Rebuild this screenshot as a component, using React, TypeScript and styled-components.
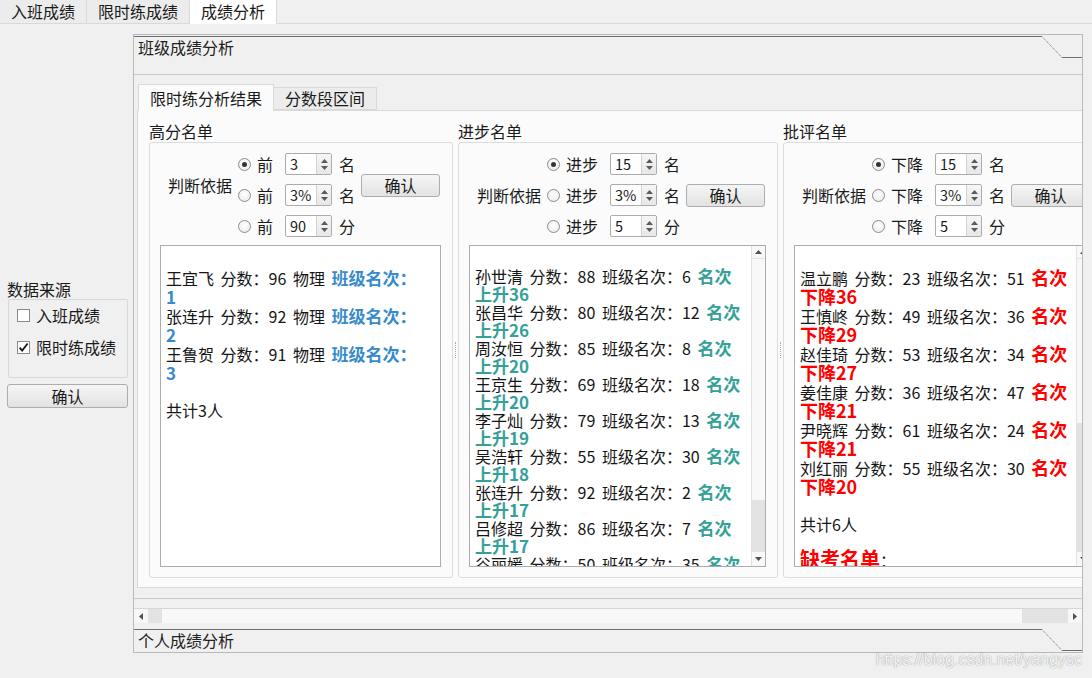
import React from 'react';
import styled, { createGlobalStyle } from 'styled-components';

const UI_FONT = '"Noto Sans CJK SC", "Noto Sans", sans-serif';

const GlobalStyle = createGlobalStyle`
  * { box-sizing: border-box; }
  html, body { margin: 0; padding: 0; }
  body {
    background: #f0f0f0;
    font-family: ${UI_FONT};
    font-size: 16px;
    color: #1a1a1a;
    overflow: hidden;
  }
`;

const Page = styled.div`
  position: relative;
  width: 1092px;
  height: 678px;
  overflow: hidden;
`;

/* ---- top tab bar ---- */
const TopTabBar = styled.div`
  display: flex;
  align-items: flex-start;
  height: 24px;
  border-bottom: 1px solid #d9d9d9;
`;

const TopTab = styled.div<{ $active?: boolean }>`
  height: ${(p) => (p.$active ? 24 : 23)}px;
  padding: 0 11px;
  line-height: 23px;
  border-right: 1px solid #d9d9d9;
  background: ${(p) => (p.$active ? '#ffffff' : '#ececec')};
`;

const Body = styled.div`
  display: flex;
  height: 619px;
  margin-top: 10px;
`;

/* ---- left side panel ---- */
const SidePanel = styled.div`
  width: 133px;
  flex-shrink: 0;
  display: flex;
  flex-direction: column;
  justify-content: center;
  padding-left: 8px;
`;

const SideTitle = styled.div`
  line-height: 20px;
  margin-left: -1px;
`;

const SideGroup = styled.div`
  width: 120px;
  border: 1px solid #d8d8d8;
  border-radius: 2px;
  padding: 4px 0 19px 8px;
  display: flex;
  flex-direction: column;
  gap: 10px;
`;

const CheckRow = styled.div`
  display: flex;
  align-items: center;
  gap: 6px;
  height: 22px;
`;

const CheckBox = styled.span`
  width: 13px;
  height: 13px;
  border: 1px solid #8a8a8a;
  background: #ffffff;
  display: flex;
  align-items: center;
  justify-content: center;
`;

const PushButton = styled.div<{ $w: number; $lift?: number }>`
  width: ${(p) => p.$w}px;
  height: 23px;
  flex-shrink: 0;
  border: 1px solid #adadad;
  border-radius: 3px;
  background: linear-gradient(#f5f5f5, #e3e3e3);
  display: flex;
  align-items: center;
  justify-content: center;
  line-height: 20px;
  margin-bottom: ${(p) => p.$lift ?? 0}px;
`;

const SideButton = styled(PushButton)`
  height: 24px;
  margin-top: 6px;
  margin-left: -1px;
`;

const CritButton = styled(PushButton)`
  margin-left: 6px;
`;

/* ---- main frame ---- */
const MainFrame = styled.div`
  width: 950px;
  height: 619px;
  flex-shrink: 0;
  border: 1px solid #b9b9b9;
  display: flex;
  flex-direction: column;
`;

const HeaderWrap = styled.div<{ $first?: boolean }>`
  display: flex;
  align-items: flex-start;
  height: ${(p) => (p.$first ? 40 : 23)}px;
  padding-top: ${(p) => (p.$first ? 1 : 0)}px;
  border-bottom: ${(p) => (p.$first ? '1px solid #c8c8c8' : 'none')};
  flex-shrink: 0;
`;

const HeaderMain = styled.div`
  flex: 1;
  align-self: stretch;
  border-top: 1px solid #6e6e6e;
  padding: 0 0 0 4px;
  line-height: 21px;
  color: #222;
`;

const HeaderTail = styled.div`
  width: 20px;
  height: 22px;
  border-bottom: 1px solid #6e6e6e;
`;

const SectionHeader = ({ title, first }: { title: string; first?: boolean }) => (
  <HeaderWrap $first={first}>
    <HeaderMain>{title}</HeaderMain>
    <svg width="20" height="22" viewBox="0 0 20 22">
      <line x1="0" y1="0.5" x2="20" y2="21.5" stroke="#6e6e6e" strokeWidth="1" strokeDasharray="1 1" />
    </svg>
    <HeaderTail />
  </HeaderWrap>
);

const SectionBody = styled.div`
  display: flex;
  flex-direction: column;
  height: 554px;
  flex-shrink: 0;
`;

const Viewport = styled.div`
  height: 524px;
  overflow: hidden;
  padding: 9px 0 0 3px;
  border-bottom: 1px solid #cacaca;
`;

/* ---- scrollbars ---- */
const HScroll = styled.div`
  display: flex;
  height: 15px;
  margin: 9px 0 6px;
  border-top: 1px solid #d6d6d6;
  background: #f7f7f7;
`;

const ArrowCell = styled.div<{ $w: number; $h: number }>`
  width: ${(p) => p.$w}px;
  height: ${(p) => p.$h}px;
  flex-shrink: 0;
  display: flex;
  align-items: center;
  justify-content: center;
`;

const TrackPiece = styled.div<{ $w?: number }>`
  background: #e3e3e3;
  width: ${(p) => p.$w ?? 14}px;
  flex-shrink: 0;
`;

const Thumb = styled.div<{ $h?: number }>`
  background: #f8f8f8;
  ${(p) => (p.$h ? `height: ${p.$h}px; flex-shrink: 0;` : 'flex: 1;')}
`;

const VScroll = styled.div`
  width: 14px;
  flex-shrink: 0;
  display: flex;
  flex-direction: column;
  border-left: 1px solid #e2e2e2;
  background: #f8f8f8;
`;

const VTrack = styled.div`
  flex: 1;
  background: #e3e3e3;
`;

const UpCell = styled(ArrowCell)`
  border-bottom: 1px solid #e2e2e2;
`;

const Tri = ({ dir, color = '#505050' }: { dir: 'up' | 'down' | 'left' | 'right'; color?: string }) => {
  const horiz = dir === 'left' || dir === 'right';
  const pts = {
    up: '0,4 3.5,0 7,4',
    down: '0,0 7,0 3.5,4',
    left: '4,0 4,7 0,3.5',
    right: '0,0 0,7 4,3.5',
  }[dir];
  return (
    <svg width={horiz ? 4 : 7} height={horiz ? 7 : 4} viewBox={horiz ? '0 0 4 7' : '0 0 7 4'}>
      <polygon points={pts} fill={color} />
    </svg>
  );
};

/* ---- inner tab widget ---- */
const TabWidget = styled.div`
  width: 990px;
`;

const InnerTabBar = styled.div`
  display: flex;
  align-items: flex-start;
  height: 27px;
  padding-left: 1px;
  border-bottom: 1px solid #d9d9d9;
`;

const InnerTab = styled.div<{ $active?: boolean }>`
  height: ${(p) => (p.$active ? 27 : 23)}px;
  margin-top: ${(p) => (p.$active ? 0 : 3)}px;
  padding: ${(p) => (p.$active ? '2px 11px 0' : '0 11px')};
  line-height: ${(p) => (p.$active ? 23 : 21)}px;
  border: 1px solid #d9d9d9;
  border-left: ${(p) => (p.$active ? '1px solid #d9d9d9' : 'none')};
  border-bottom: ${(p) => (p.$active ? 'none' : '1px solid #d9d9d9')};
  background: ${(p) => (p.$active ? '#fbfbfb' : '#ececec')};
`;

const TabPane = styled.div`
  height: 477px;
  border: 1px solid #d9d9d9;
  border-top: none;
  background: #fbfbfb;
  padding: 10px 0 9px 11px;
  display: flex;
`;

const Group = styled.div<{ $w: number }>`
  width: ${(p) => p.$w}px;
  flex-shrink: 0;
  display: flex;
  flex-direction: column;
`;

const GroupTitle = styled.div`
  height: 21px;
  line-height: 20px;
`;

const GroupFrame = styled.div`
  height: 436px;
  border: 1px solid #dcdcdc;
  border-radius: 3px;
  padding: 10px 11px 10px 10px;
  display: flex;
  flex-direction: column;
`;

const SplitHandle = styled.div`
  width: 5px;
  flex-shrink: 0;
  display: flex;
  align-items: center;
  justify-content: center;
`;

const Grip = styled.div`
  height: 16px;
  border-left: 1px dotted #a8a8a8;
`;

const Controls = styled.div`
  height: 84px;
  display: flex;
  align-items: center;
  padding-left: 8px;
  flex-shrink: 0;
`;

const CritLabel = styled.div<{ $lift: number }>`
  width: 64px;
  margin-right: 6px;
  white-space: nowrap;
  line-height: 20px;
  margin-bottom: ${(p) => p.$lift}px;
`;

const RadioCol = styled.div`
  display: flex;
  flex-direction: column;
  gap: 9px;
`;

const RadioRow = styled.div`
  height: 22px;
  display: flex;
  align-items: center;
`;

const Radio = styled.span<{ $on?: boolean }>`
  width: 13px;
  height: 13px;
  border-radius: 50%;
  border: 1px solid #8c8c8c;
  background: radial-gradient(circle at 50% 40%, #ffffff, #e8e8e8);
  display: flex;
  align-items: center;
  justify-content: center;
  margin-right: 6px;
  flex-shrink: 0;

  &::after {
    content: '';
    width: 5px;
    height: 5px;
    border-radius: 50%;
    background: #333333;
    display: ${(p) => (p.$on ? 'block' : 'none')};
  }
`;

const RadioText = styled.span`
  margin-right: 12px;
  white-space: nowrap;
`;

const SpinBox = styled.div`
  display: flex;
  width: 47px;
  height: 22px;
  border: 1px solid #acacac;
  border-radius: 2px;
  background: #ffffff;
  margin-right: 7px;
  flex-shrink: 0;
`;

const SpinValue = styled.div`
  flex: 1;
  padding-left: 4px;
  font-size: 14.5px;
  line-height: 20px;
`;

const SpinArrows = styled.div`
  width: 15px;
  border-left: 1px solid #d2d2d2;
  background: linear-gradient(#f6f6f6, #e7e7e7);
  display: flex;
  flex-direction: column;
  align-items: center;
  justify-content: center;
  gap: 3px;
`;

const Unit = styled.span`
  width: 16px;
  flex-shrink: 0;
`;

const ListBox = styled.div`
  margin-top: 8px;
  height: 322px;
  border: 1px solid #adadad;
  background: #ffffff;
  display: flex;
`;

const ListText = styled.div`
  flex: 1;
  min-width: 0;
  overflow: hidden;
  padding: 3px 5px 0;
  font-size: 16px;
  color: #151515;
  white-space: nowrap;
  word-spacing: 3px;
`;

const Line = styled.div<{ $h: number; $gap?: number }>`
  height: ${(p) => p.$h}px;
  line-height: ${(p) => p.$h}px;
  margin-top: ${(p) => p.$gap ?? 0}px;
`;

const Mark = styled.span<{ $tone: string; $size: number; $weight?: number }>`
  color: ${(p) => p.$tone};
  font-size: ${(p) => p.$size}px;
  font-weight: ${(p) => p.$weight ?? 700};
`;

const Watermark = styled.div`
  position: absolute;
  right: 10px;
  bottom: 9px;
  font-family: "Liberation Sans", Arial, sans-serif;
  font-size: 16px;
  color: rgba(255, 255, 255, 0.9);
  text-shadow: 0 0 1px rgba(0, 0, 0, 0.35), 0 0 2px rgba(0, 0, 0, 0.15);
`;

const BLUE = '#378bcb';
const TEAL = '#34a199';
const RED = '#ff0000';

const topList = [
  ['王宜飞', '96', '1'],
  ['张连升', '92', '2'],
  ['王鲁贺', '91', '3'],
];

const upList = [
  ['孙世清', '88', '6', '36'],
  ['张昌华', '80', '12', '26'],
  ['周汝恒', '85', '8', '20'],
  ['王京生', '69', '18', '20'],
  ['李子灿', '79', '13', '19'],
  ['吴浩轩', '55', '30', '18'],
  ['张连升', '92', '2', '17'],
  ['吕修超', '86', '7', '17'],
  ['谷丽媛', '50', '35', '16'],
  ['陈思远', '62', '27', '15'],
];

const downList = [
  ['温立鹏', '23', '51', '36'],
  ['王慎峂', '49', '36', '29'],
  ['赵佳琦', '53', '34', '27'],
  ['姜佳康', '36', '47', '21'],
  ['尹晓辉', '61', '24', '21'],
  ['刘红丽', '55', '30', '20'],
];

type Crit = { word: string; values: string[]; units: string[] };

const CritControls = ({ word, values, units, lift }: Crit & { lift: number }) => (
  <Controls>
    <CritLabel $lift={lift}>判断依据</CritLabel>
    <RadioCol>
      {values.map((v, i) => (
        <RadioRow key={i}>
          <Radio $on={i === 0} />
          <RadioText>{word}</RadioText>
          <SpinBox>
            <SpinValue>{v}</SpinValue>
            <SpinArrows>
              <Tri dir="up" color="#5a5a5a" />
              <Tri dir="down" color="#5a5a5a" />
            </SpinArrows>
          </SpinBox>
          <Unit>{units[i]}</Unit>
        </RadioRow>
      ))}
    </RadioCol>
    <CritButton $w={79} $lift={lift}>确认</CritButton>
  </Controls>
);

const ListScroll = ({ thumb }: { thumb: number }) => (
  <VScroll>
    <UpCell $w={13} $h={13}>
      <Tri dir="up" />
    </UpCell>
    <Thumb $h={thumb} />
    <VTrack />
    <ArrowCell $w={13} $h={14}>
      <Tri dir="down" />
    </ArrowCell>
  </VScroll>
);

export default function App() {
  return (
    <Page>
      <GlobalStyle />
      <TopTabBar>
        <TopTab>入班成绩</TopTab>
        <TopTab>限时练成绩</TopTab>
        <TopTab $active>成绩分析</TopTab>
      </TopTabBar>

      <Body>
        <SidePanel>
          <SideTitle>数据来源</SideTitle>
          <SideGroup>
            <CheckRow>
              <CheckBox />
              入班成绩
            </CheckRow>
            <CheckRow>
              <CheckBox>
                <svg width="11" height="11" viewBox="0 0 11 11">
                  <path d="M1.6 5.6 L4.2 8.6 L9.6 1.6" fill="none" stroke="#111" strokeWidth="1.7" />
                </svg>
              </CheckBox>
              限时练成绩
            </CheckRow>
          </SideGroup>
          <SideButton $w={121}>确认</SideButton>
        </SidePanel>

        <MainFrame>
          <SectionHeader title="班级成绩分析" first />
          <SectionBody>
            <Viewport>
              <TabWidget>
                <InnerTabBar>
                  <InnerTab $active>限时练分析结果</InnerTab>
                  <InnerTab>分数段区间</InnerTab>
                </InnerTabBar>
                <TabPane>
                  <Group $w={304}>
                    <GroupTitle>高分名单</GroupTitle>
                    <GroupFrame>
                      <CritControls word="前" values={['3', '3%', '90']} units={['名', '名', '分']} lift={20} />
                      <ListBox>
                        <ListText>
                          <Line $h={19} />
                          {topList.map(([name, score, rank]) => (
                            <React.Fragment key={name}>
                              <Line $h={19}>
                                {name} 分数：{score} 物理 <Mark $tone={BLUE} $size={17} $weight={600}>班级名次：</Mark>
                              </Line>
                              <Line $h={19}>
                                <Mark $tone={BLUE} $size={17} $weight={600}>{rank}</Mark>
                              </Line>
                            </React.Fragment>
                          ))}
                          <Line $h={19} />
                          <Line $h={19}>共计3人</Line>
                        </ListText>
                      </ListBox>
                    </GroupFrame>
                  </Group>

                  <SplitHandle>
                    <Grip />
                  </SplitHandle>

                  <Group $w={320}>
                    <GroupTitle>进步名单</GroupTitle>
                    <GroupFrame>
                      <CritControls word="进步" values={['15', '3%', '5']} units={['名', '名', '分']} lift={0} />
                      <ListBox>
                        <ListText>
                          <Line $h={18} />
                          {upList.map(([name, score, rank, up]) => (
                            <React.Fragment key={name}>
                              <Line $h={18}>
                                {name} 分数：{score} 班级名次：{rank} <Mark $tone={TEAL} $size={17} $weight={600}>名次</Mark>
                              </Line>
                              <Line $h={18}>
                                <Mark $tone={TEAL} $size={17} $weight={600}>上升{up}</Mark>
                              </Line>
                            </React.Fragment>
                          ))}
                        </ListText>
                        <ListScroll thumb={241} />
                      </ListBox>
                    </GroupFrame>
                  </Group>

                  <SplitHandle>
                    <Grip />
                  </SplitHandle>

                  <Group $w={320}>
                    <GroupTitle>批评名单</GroupTitle>
                    <GroupFrame>
                      <CritControls word="下降" values={['15', '3%', '5']} units={['名', '名', '分']} lift={0} />
                      <ListBox>
                        <ListText>
                          <Line $h={19} />
                          {downList.map(([name, score, rank, down]) => (
                            <React.Fragment key={name}>
                              <Line $h={19}>
                                {name} 分数：{score} 班级名次：{rank} <Mark $tone={RED} $size={18}>名次</Mark>
                              </Line>
                              <Line $h={19}>
                                <Mark $tone={RED} $size={18}>下降{down}</Mark>
                              </Line>
                            </React.Fragment>
                          ))}
                          <Line $h={19} />
                          <Line $h={19}>共计6人</Line>
                          <Line $h={22} $gap={14}>
                            <Mark $tone={RED} $size={20}>缺考名单</Mark>：
                          </Line>
                        </ListText>
                        <ListScroll thumb={164} />
                      </ListBox>
                    </GroupFrame>
                  </Group>
                </TabPane>
              </TabWidget>
            </Viewport>

            <HScroll>
              <ArrowCell $w={14} $h={14}>
                <Tri dir="left" />
              </ArrowCell>
              <TrackPiece $w={14} />
              <Thumb />
              <TrackPiece $w={46} />
              <ArrowCell $w={14} $h={14}>
                <Tri dir="right" />
              </ArrowCell>
            </HScroll>
          </SectionBody>
          <SectionHeader title="个人成绩分析" />
        </MainFrame>
      </Body>

      <Watermark>https://blog.csdn.net/yangysc</Watermark>
    </Page>
  );
}
